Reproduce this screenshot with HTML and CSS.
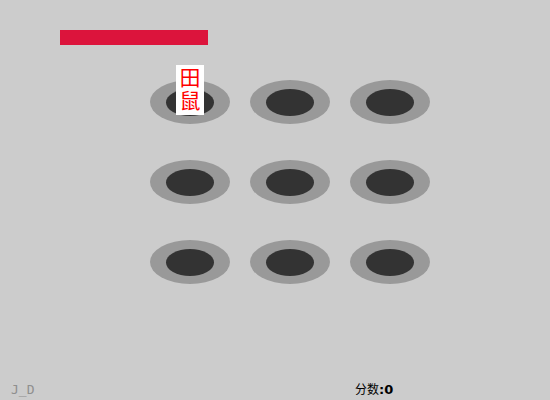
FILE: index.html
```html
<!DOCTYPE html>
<html>
<head>
<meta charset="utf-8">
<link rel="stylesheet" href="styles.css">
</head>
<body>
<div class="page">
  <div class="timebar"></div>
  <div class="grid">
    <div class="hole"><div class="pit"></div><div class="mouse">田鼠</div></div>
    <div class="hole"><div class="pit"></div></div>
    <div class="hole"><div class="pit"></div></div>
    <div class="hole"><div class="pit"></div></div>
    <div class="hole"><div class="pit"></div></div>
    <div class="hole"><div class="pit"></div></div>
    <div class="hole"><div class="pit"></div></div>
    <div class="hole"><div class="pit"></div></div>
    <div class="hole"><div class="pit"></div></div>
  </div>
  <div class="footer">
    <span class="author">J_D</span>
    <span class="score">分数<b>:0</b></span>
  </div>
</div>
</body>
</html>
```
FILE: styles.css
```css
html, body {
  margin: 0;
  padding: 0;
  background: #cccccc;
}
.page {
  width: 550px;
  height: 400px;
  display: flex;
  flex-direction: column;
  font-family: "DejaVu Sans", "Noto Sans CJK SC", sans-serif;
}
.timebar {
  margin: 30px 0 0 60px;
  width: 148px;
  height: 15px;
  background: #dc143c;
}
.grid {
  margin: 35px 0 0 150px;
  display: grid;
  grid-template-columns: repeat(3, 80px);
  grid-auto-rows: 44px;
  column-gap: 20px;
  row-gap: 36px;
}
.hole {
  position: relative;
  width: 80px;
  height: 44px;
  border-radius: 50%;
  background: #999999;
  display: flex;
  align-items: center;
  justify-content: center;
}
.pit {
  width: 48px;
  height: 27px;
  border-radius: 50%;
  background: #333333;
}
.mouse {
  position: absolute;
  left: 26px;
  top: -15px;
  width: 28px;
  height: 50px;
  box-sizing: border-box;
  padding-top: 2px;
  background: #ffffff;
  color: #ff0000;
  writing-mode: vertical-rl;
  text-orientation: upright;
  font-family: "Noto Sans CJK SC", sans-serif;
  font-size: 21px;
  line-height: 28px;
  letter-spacing: 2px;
}
.footer {
  margin-top: auto;
  height: 24px;
  display: flex;
  align-items: center;
  font-size: 12px;
}
.author {
  margin-left: 11px;
  width: 344px;
  color: #8f8f8f;
  font-family: "DejaVu Sans Mono", monospace;
  font-size: 13px;
  padding-top: 3px;
}
.score {
  color: #000;
  font-family: "Noto Sans CJK SC", sans-serif;
}
.score b {
  font-family: "DejaVu Sans", sans-serif;
  font-size: 13px;
}
```
